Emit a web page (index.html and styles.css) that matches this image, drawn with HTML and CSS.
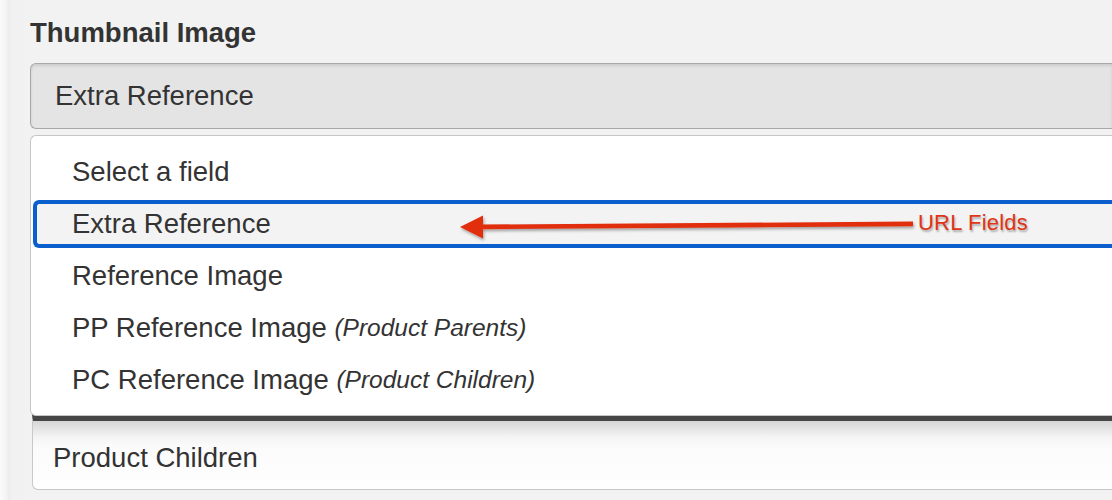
FILE: index.html
```html
<!DOCTYPE html>
<html>
<head>
<meta charset="utf-8">
<link rel="stylesheet" href="styles.css">
</head>
<body>
<div class="page">
  <div class="form">
    <h2 class="label">Thumbnail Image</h2>
    <div class="select">Extra Reference</div>
    <ul class="menu">
      <li class="option">Select a field</li>
      <li class="option active">Extra Reference</li>
      <li class="option">Reference Image</li>
      <li class="option">PP Reference Image <em class="hint">(Product Parents)</em></li>
      <li class="option">PC Reference Image <em class="hint">(Product Children)</em></li>
    </ul>
    <div class="field">
      <div class="field-box">Product Children</div>
    </div>
  </div>
  <div class="annotation">
    <svg class="arrow" width="1112" height="500" viewBox="0 0 1112 500">
      <defs>
        <filter id="sh" x="-5%" y="-50%" width="110%" height="200%">
          <feDropShadow dx="1" dy="2" stdDeviation="1.5" flood-color="#000" flood-opacity="0.35"/>
        </filter>
      </defs>
      <g filter="url(#sh)" fill="#e12d0c">
        <polygon points="913,221.6 913,226.2 478,229.2 478,224.6"/>
        <polygon points="460,227 483,215.5 483,238.5"/>
      </g>
    </svg>
    <span class="note">URL Fields</span>
  </div>
</div>
</body>
</html>
```
FILE: styles.css
```css
html, body {
  margin: 0;
  padding: 0;
}
body {
  width: 1112px;
  height: 500px;
  overflow: hidden;
  background: linear-gradient(to right, #fbfbfb 0, #f4f4f4 6px, #ececec 9px, #f1f1f1 12px, #f2f2f2 30px);
  font-family: "Liberation Sans", Arial, Helvetica, sans-serif;
  color: #333;
}
.page {
  position: relative;
  width: 1112px;
  height: 500px;
  overflow: hidden;
}
.form {
  box-sizing: border-box;
  width: 1112px;
  padding-left: 30px;
  padding-top: 16px;
}
.label {
  margin: 0 0 14px 0;
  font-size: 27.5px;
  line-height: 33px;
  font-weight: bold;
  color: #333;
}
.select {
  box-sizing: border-box;
  height: 66px;
  display: flex;
  align-items: center;
  padding-left: 24px;
  background: #e4e4e4;
  border: 1px solid #a8a8a8;
  border-right: none;
  border-radius: 6px 0 0 6px;
  box-shadow: inset 0 2px 3px rgba(0, 0, 0, 0.10);
  font-size: 27.5px;
}
.menu {
  list-style: none;
  margin: 6px 0 0 0;
  padding: 12px 0 11px 2px;
  background: #fff;
  border: 1px solid #c6c6c6;
  border-right: none;
  border-radius: 6px 0 0 6px;
  display: flex;
  flex-direction: column;
  gap: 4px;
  position: relative;
  z-index: 1;
}
.option {
  box-sizing: border-box;
  height: 48px;
  display: flex;
  align-items: center;
  padding-left: 35px;
  border: 4px solid transparent;
  border-right: none;
  border-radius: 6px 0 0 6px;
  font-size: 27.5px;
  color: #333;
  white-space: pre;
}
.option.active {
  border-color: #0a5fcd;
  background: #f3f3f3;
}
.hint {
  font-style: italic;
  font-size: 24.5px;
}
.field {
  margin-left: 2px;
  margin-top: -1px;
}
.field-box {
  box-sizing: border-box;
  height: 75px;
  display: flex;
  align-items: center;
  padding-left: 20px;
  padding-top: 6px;
  border: 1px solid #c8c8c8;
  border-right: none;
  border-top: 6px solid #464646;
  border-radius: 0 0 0 6px;
  background: linear-gradient(to bottom, #d6d6d6 0, #f4f4f4 16px, #fbfbfb 26px, #fefefe 100%);
  font-size: 27.5px;
  color: #333;
}
.annotation {
  position: absolute;
  left: 0;
  top: 0;
  width: 1112px;
  height: 500px;
  pointer-events: none;
  z-index: 2;
}
.arrow {
  position: absolute;
  left: 0;
  top: 0;
}
.note {
  position: absolute;
  left: 918px;
  top: 210px;
  font-size: 22px;
  line-height: 26px;
  letter-spacing: 0.2px;
  color: #df3516;
  text-shadow: 1px 2px 2px rgba(0, 0, 0, 0.3);
}
```
